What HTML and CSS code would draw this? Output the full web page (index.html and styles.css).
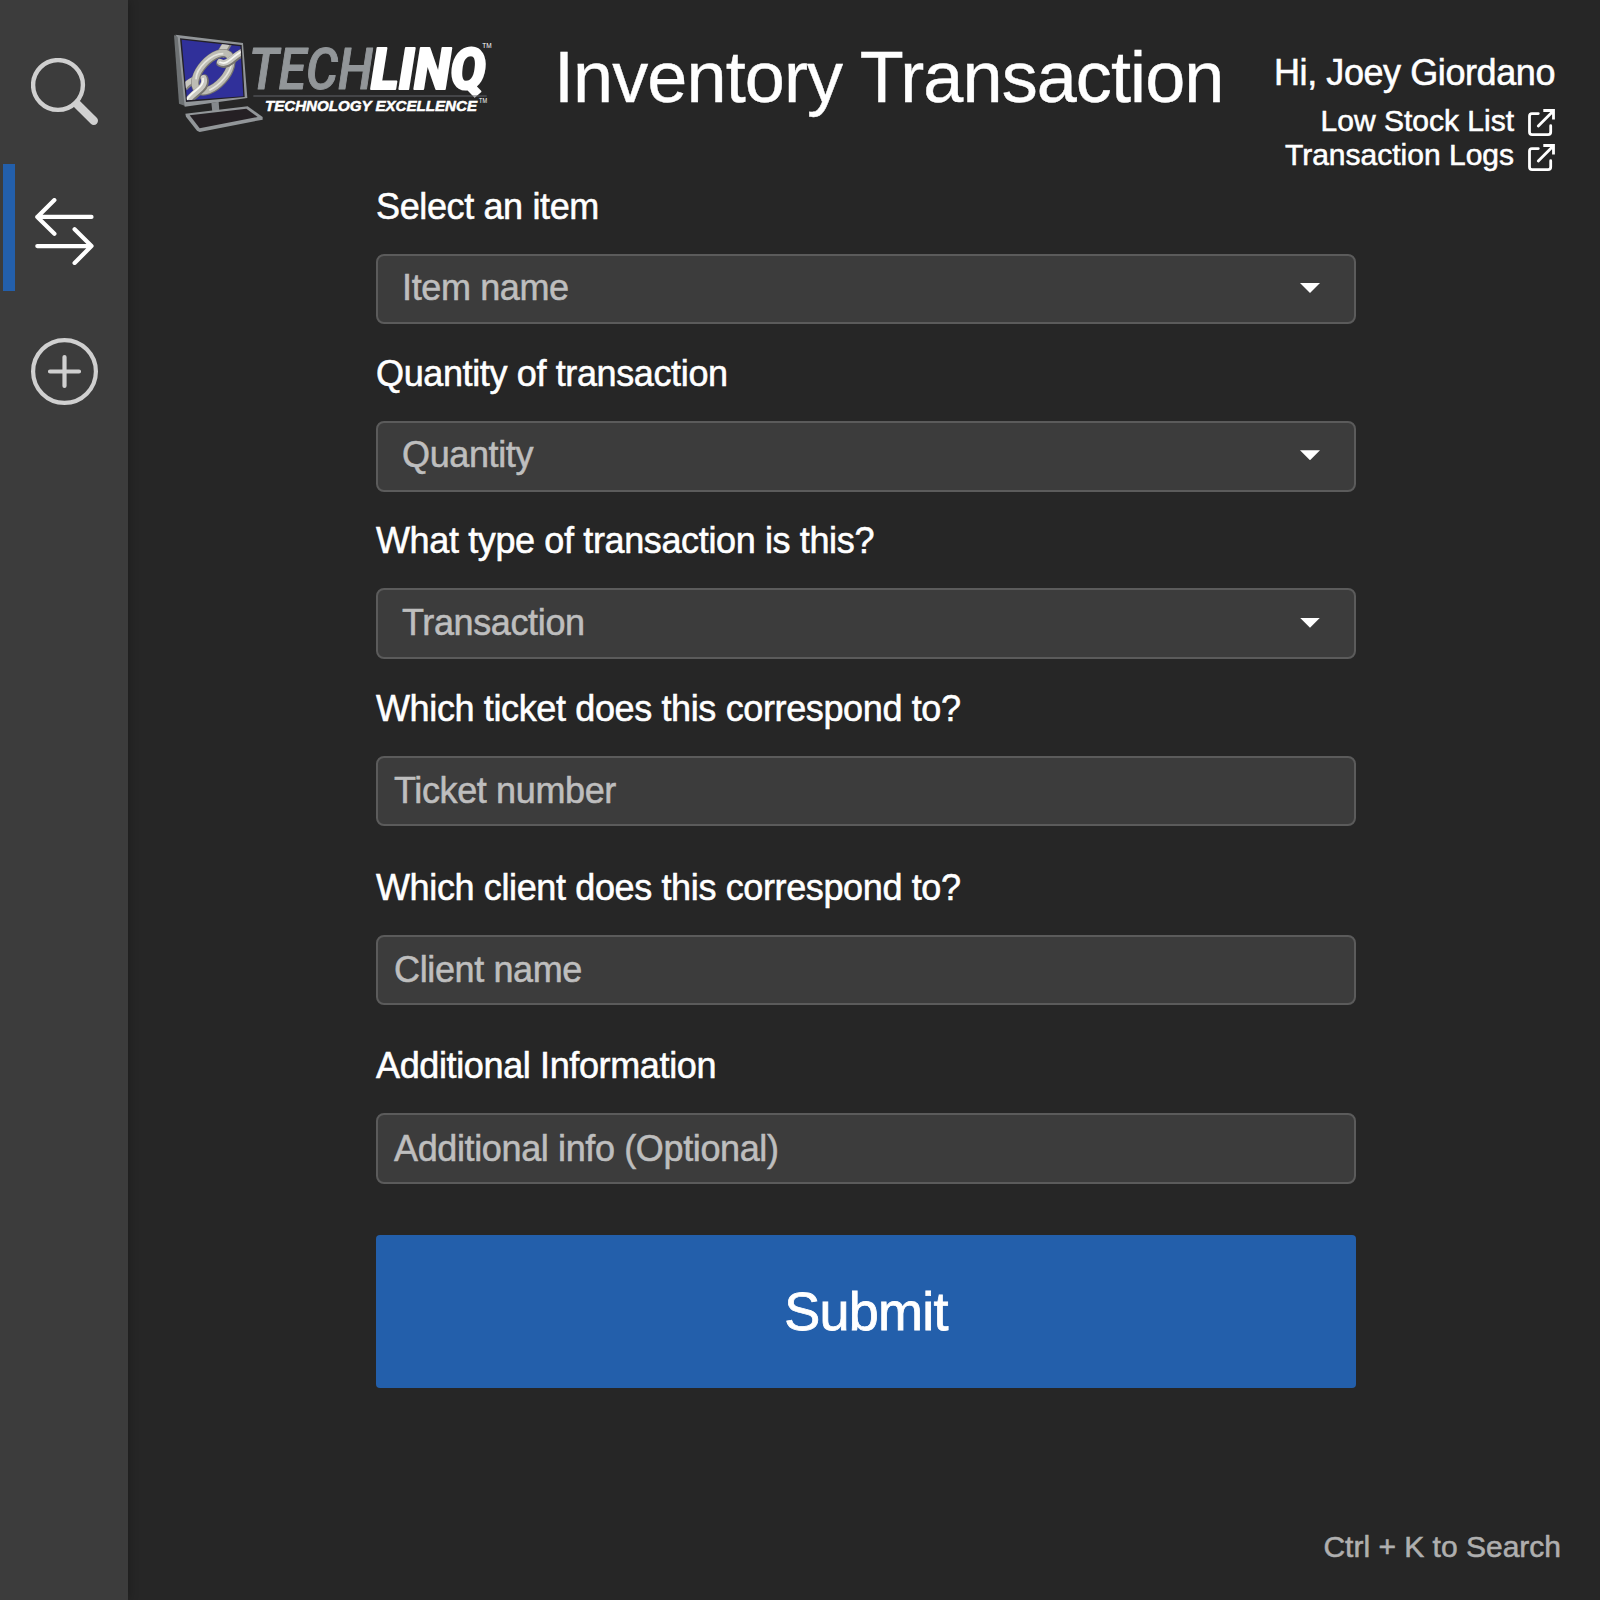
FILE: index.html
```html
<!DOCTYPE html>
<html lang="en">
<head>
<meta charset="utf-8">
<title>Inventory Transaction</title>
<link rel="stylesheet" href="styles.css">
</head>
<body>
<div class="app">
  <nav class="sidebar">
    <a class="nav-item" aria-label="Search">
      <svg class="nav-icon" viewBox="0 0 67 67" fill="none" stroke="currentColor">
        <circle cx="27" cy="27" r="24.9" stroke-width="4.4"/>
        <path d="M46.2 46.2 62.8 62.8" stroke-width="8.4" stroke-linecap="round"/>
      </svg>
    </a>
    <a class="nav-item nav-item-active" aria-label="Transaction">
      <svg class="nav-icon" viewBox="0 0 67 67" fill="none" stroke="currentColor" stroke-width="4.2" stroke-linecap="round" stroke-linejoin="round">
        <path d="M60.5 18.9H6.3M23.4 2.1 6.3 18.9 23.4 35.7M6.3 48.1H60.5M43.6 31.3 60.5 48.1 43.6 64.9"/>
      </svg>
    </a>
    <a class="nav-item" aria-label="Add">
      <svg class="nav-icon" viewBox="0 0 67 67" fill="none" stroke="currentColor" stroke-width="4.2" stroke-linecap="round">
        <circle cx="33.5" cy="33.5" r="31.4"/>
        <path d="M33.5 19v29M19 33.5h29"/>
      </svg>
    </a>
  </nav>
  <main class="main">
    <header class="header">
      <svg class="logo" viewBox="0 0 1020 360" role="img" aria-label="TechLinq">
        <defs><clipPath id="screen"><path d="M65 59 241 79 250 229 81 241Z"/></clipPath></defs>
        <path fill="#6d7173" d="M42 46 60 48 76 258 57 251Z"/>
        <path fill="#929699" d="M46 44 249 69 262 234 74 260 53 52Z"/>
        <path fill="#232026" d="M60 55 245 75 254 231 78 246Z"/>
        <path fill="#30309a" d="M65 59 241 79 250 229 81 241Z"/>
        <g clip-path="url(#screen)" fill="none">
          <path stroke="#85837d" stroke-width="27" d="M204 67 180 107"/>
          <path stroke="#c9c8c1" stroke-width="20" d="M202 66 178 107"/>
          <path stroke="#85837d" stroke-width="22" d="M72 205C80 190 92 186 108 178"/>
          <path stroke="#c9c8c1" stroke-width="15" d="M72 202C80 187 92 183 108 175"/>
          <ellipse stroke="#77756f" stroke-width="25" cx="160" cy="157" rx="70" ry="37" transform="rotate(-48 160 157)"/>
          <ellipse stroke="#bdbcb4" stroke-width="20" cx="159" cy="156" rx="70" ry="37" transform="rotate(-48 159 156)"/>
          <path stroke="#e6e6df" stroke-width="5" d="M108 178C108 145 152 101 190 101M148 211C182 194 209 160 214 133"/>
          <path stroke="#77756f" stroke-width="24" stroke-linecap="round" d="M181 129C205 141 217 111 252 96"/>
          <path stroke="#c9c8c1" stroke-width="18" stroke-linecap="round" d="M180 126C204 138 216 108 252 93"/>
          <path stroke="#f8f8f3" stroke-width="5" stroke-linecap="round" d="M180 127C204 138 216 107 252 91"/>
          <path stroke="#77756f" stroke-width="24" stroke-linecap="round" d="M84 246C105 214 143 207 133 175"/>
          <path stroke="#c9c8c1" stroke-width="18" stroke-linecap="round" d="M82 243C103 211 140 205 131 174"/>
          <path stroke="#f8f8f3" stroke-width="5" d="M80 239C101 208 135 201 129 174"/>
        </g>
        <path fill="#85898c" d="M154 248 176 245 178 272 157 275Z"/>
        <path fill="#929699" d="M76 281 263 259 308 291V299L119 336 111 332 78 290Z"/>
        <path fill="#252024" d="M89 286 259 266 293 291 119 325Z"/>
        <text class="logo-tech" x="266" y="206" textLength="372" lengthAdjust="spacingAndGlyphs">TECH</text>
        <text class="logo-linq" x="633" y="206" textLength="344" lengthAdjust="spacingAndGlyphs">LINQ</text>
        <path stroke="#62656a" stroke-width="3" d="M280 228H980"/>
        <text class="logo-tagline" x="315" y="274" textLength="636" lengthAdjust="spacingAndGlyphs">TECHNOLOGY EXCELLENCE</text>
        <text class="logo-mark" x="967" y="83" textLength="28" lengthAdjust="spacingAndGlyphs">TM</text>
        <text class="logo-mark" x="957" y="249" textLength="24" lengthAdjust="spacingAndGlyphs">TM</text>
      </svg>
      <h1 class="title">Inventory Transaction</h1>
      <div class="user">
        <div class="greeting">Hi, Joey Giordano</div>
        <a class="user-link"><span>Low Stock List</span>
          <svg class="external" viewBox="0 0 27 27" fill="none" stroke="currentColor" stroke-width="2.8"><path stroke-linecap="round" d="M10.3 4.6H3.9Q1.5 4.6 1.5 7V23Q1.5 25.6 4.1 25.6H20Q22.7 25.6 22.7 23V16.7M10.3 17 24 3.2"/><path d="M15.3 1.5H25.5V10.6"/><path fill="currentColor" stroke="none" d="M20 1H26V7Z"/></svg>
        </a>
        <a class="user-link"><span>Transaction Logs</span>
          <svg class="external" viewBox="0 0 27 27" fill="none" stroke="currentColor" stroke-width="2.8"><path stroke-linecap="round" d="M10.3 4.6H3.9Q1.5 4.6 1.5 7V23Q1.5 25.6 4.1 25.6H20Q22.7 25.6 22.7 23V16.7M10.3 17 24 3.2"/><path d="M15.3 1.5H25.5V10.6"/><path fill="currentColor" stroke="none" d="M20 1H26V7Z"/></svg>
        </a>
      </div>
    </header>
    <form class="form">
      <div class="field"><div class="label">Select an item</div><div class="control select"><span>Item name</span><i class="caret"></i></div></div>
      <div class="field"><div class="label">Quantity of transaction</div><div class="control select"><span>Quantity</span><i class="caret"></i></div></div>
      <div class="field"><div class="label">What type of transaction is this?</div><div class="control select"><span>Transaction</span><i class="caret"></i></div></div>
      <div class="field field-text"><div class="label">Which ticket does this correspond to?</div><div class="control">Ticket number</div></div>
      <div class="field field-text"><div class="label">Which client does this correspond to?</div><div class="control">Client name</div></div>
      <div class="field field-text"><div class="label">Additional Information</div><div class="control">Additional info (Optional)</div></div>
      <button class="submit" type="button">Submit</button>
    </form>
    <footer class="hint">Ctrl + K to Search</footer>
  </main>
</div>
</body>
</html>
```
FILE: styles.css
```css
* { box-sizing: border-box; }

body {
  margin: 0;
  background: #262626;
  color: #fff;
  font-family: "Liberation Sans", Arial, sans-serif;
  font-size: 36px;
  line-height: 40px;
  letter-spacing: -0.37px;
  -webkit-text-stroke: 0.55px currentColor;
}

.app {
  display: flex;
  height: 1600px;
  overflow: hidden;
}

.sidebar {
  flex: none;
  width: 128px;
  padding-top: 24px;
  display: flex;
  flex-direction: column;
  gap: 13px;
  background: #3c3c3c;
  box-shadow: 0 0 10px rgba(0, 0, 0, 0.3);
}

.nav-item {
  height: 127px;
  margin-left: 3px;
  border-left: 12px solid transparent;
  padding: 8px 0 0 15.5px;
  display: flex;
  align-items: center;
  color: #d0d0d0;
}

.nav-item-active {
  border-left-color: #235fab;
  color: #fff;
}

.nav-icon {
  width: 67px;
  height: 67px;
}

.main {
  flex: 1;
  display: flex;
  flex-direction: column;
}

.header {
  height: 186.9px;
  padding: 20px 45px 0 32px;
  display: flex;
  align-items: flex-start;
}

.logo {
  flex: none;
  width: 340px;
  height: 120px;
  letter-spacing: 0;
  -webkit-text-stroke: 0;
}

.logo-tech {
  font: italic 500 172px Roboto, sans-serif;
  fill: #929699;
  stroke: #929699;
  stroke-width: 3px;
  stroke-linejoin: round;
}

.logo-linq {
  font: italic 900 170px Roboto, sans-serif;
  fill: #fff;
  stroke: #fff;
  stroke-width: 6px;
  stroke-linejoin: round;
}

.logo-tagline {
  font: italic 900 43px "Liberation Sans", sans-serif;
  fill: #fff;
  stroke: #fff;
  stroke-width: 1.5px;
}

.logo-mark {
  font: 22px "Liberation Sans", sans-serif;
  fill: #fff;
}

.title {
  margin: 17px 0 0 54px;
  font-size: 72px;
  font-weight: 400;
  line-height: 80px;
  letter-spacing: -0.9px;
  white-space: nowrap;
  -webkit-text-stroke: 0.4px currentColor;
}

.user {
  margin-left: auto;
  padding-top: 33px;
  display: flex;
  flex-direction: column;
  align-items: flex-end;
  white-space: nowrap;
}

.greeting {
  margin-bottom: 11px;
  letter-spacing: -0.42px;
}

.user-link {
  height: 34px;
  display: flex;
  gap: 14px;
  font-size: 30px;
  line-height: 34px;
  letter-spacing: 0;
}

.user-link + .user-link .external { margin-top: 6px; }

.external {
  width: 27px;
  height: 27px;
  margin-top: 5px;
}

.form {
  width: 980px;
  margin-left: 248px;
}

.field { margin-bottom: 29.9px; }

.field-text { margin-bottom: 41.4px; }

.label { margin-bottom: 27px; }

.control {
  height: 70.4px;
  padding: 1px 16px 0 16px;
  border: 2px solid #5b5b5b;
  border-radius: 8px;
  background: #3c3c3c;
  color: #bebebe;
  display: flex;
  align-items: center;
}

.select {
  justify-content: space-between;
  padding: 0 34px 2px 24px;
}

.caret {
  width: 20px;
  height: 10px;
  background: #fff;
  clip-path: polygon(0 0, 100% 0, 50% 100%);
}

.submit {
  display: block;
  width: 980px;
  height: 153px;
  margin-top: 51px;
  border: 0;
  border-radius: 4px;
  background: #235fab;
  color: #fff;
  font: 54px "Liberation Sans", Arial, sans-serif;
  letter-spacing: -0.8px;
  -webkit-text-stroke: 0.8px currentColor;
}

.hint {
  margin: auto 39px 33px auto;
  color: #afafaf;
  font-size: 30px;
  letter-spacing: 0;
}
```
